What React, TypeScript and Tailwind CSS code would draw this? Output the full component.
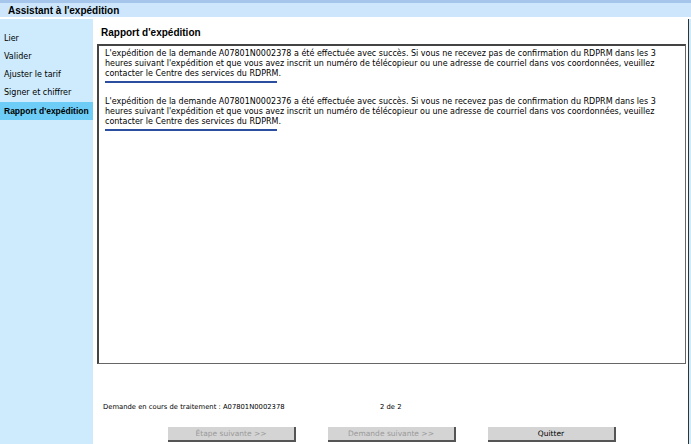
const font = { fontFamily: '"DejaVu Sans", Verdana, sans-serif' };
const heading = { fontFamily: '"Liberation Sans", Arial, sans-serif' };

const steps = ["Lier", "Valider", "Ajuster le tarif", "Signer et chiffrer", "Rapport d'expédition"];

const messages = ["A07801N0002378", "A07801N0002376"];

function Message({ id }: { id: string }) {
  return (
    <div className="pb-[14px]">
      <p className="text-[8px] leading-[10px] text-black">
        L'expédition de la demande {id} a été effectuée avec succès. Si vous ne recevez pas de confirmation du RDPRM
        dans les 3 heures suivant l'expédition et que vous avez inscrit un numéro de télécopieur ou une adresse de
        courriel dans vos coordonnées, veuillez contacter le Centre des services du RDPRM.
      </p>
      <div className="mt-[2px] h-[2px] w-[172px] bg-[#2b4f9e]" />
    </div>
  );
}

function Btn({ label, disabled }: { label: string; disabled?: boolean }) {
  return (
    <button
      type="button"
      className={
        "h-[15px] w-[128px] border-b-2 border-r-2 border-b-[#555] border-r-[#555] bg-[#d4d4d4] text-[7.5px] leading-[13px] " +
        (disabled ? "text-[#9a9a9a]" : "text-black")
      }
    >
      {label}
    </button>
  );
}

export default function App() {
  return (
    <div style={font} className="flex h-[444px] w-[691px] flex-col overflow-hidden bg-white">
      <div className="h-[3px] bg-[#a5c6ea]" />
      <div style={heading} className="flex h-[14px] items-center bg-[#cde6fb] pl-[8px] text-[10px] font-bold text-black">
        Assistant à l'expédition
      </div>
      <div className="h-[2px] bg-white" />
      <div className="flex flex-1">
        <div className="flex w-[93px] flex-col bg-[#cdebfd] pt-[11px]">
          {steps.map((s, i) => {
            const active = i === steps.length - 1;
            return (
              <div
                key={s}
                style={active ? heading : undefined}
                className={
                  "flex h-[18px] items-center whitespace-nowrap pl-[4px] " +
                  (active ? "bg-[#6dcdf6] pl-[3px] text-[8.5px] font-bold text-black" : "text-[8px] text-black")
                }
              >
                {s}
              </div>
            );
          })}
        </div>
        <div className="flex flex-1 flex-col pl-[4px] pr-[2px]">
          <div style={heading} className="pl-[4px] pt-[7px] text-[10px] font-bold leading-[13px]">
            Rapport d'expédition
          </div>
          <div className="mt-[5px] h-[320px] border border-l-2 border-t-2 border-[#666] border-l-[#444] border-t-[#444] px-[6px] pt-[3px]">
            {messages.map((m) => (
              <Message key={m} id={m} />
            ))}
          </div>
          <div className="mt-[38px] flex pl-[6px] text-[6.8px]">
            <span className="w-[277px]">Demande en cours de traitement : A07801N0002378</span>
            <span>2 de 2</span>
          </div>
          <div className="mt-[15px] flex gap-[32px] pl-[71px]">
            <Btn label="Étape suivante >>" disabled />
            <Btn label="Demande suivante >>" disabled />
            <Btn label="Quitter" />
          </div>
        </div>
        <div className="w-[1px] bg-[#333]" />
        <div className="w-[2px] bg-[#cdebfd]" />
      </div>
    </div>
  );
}
